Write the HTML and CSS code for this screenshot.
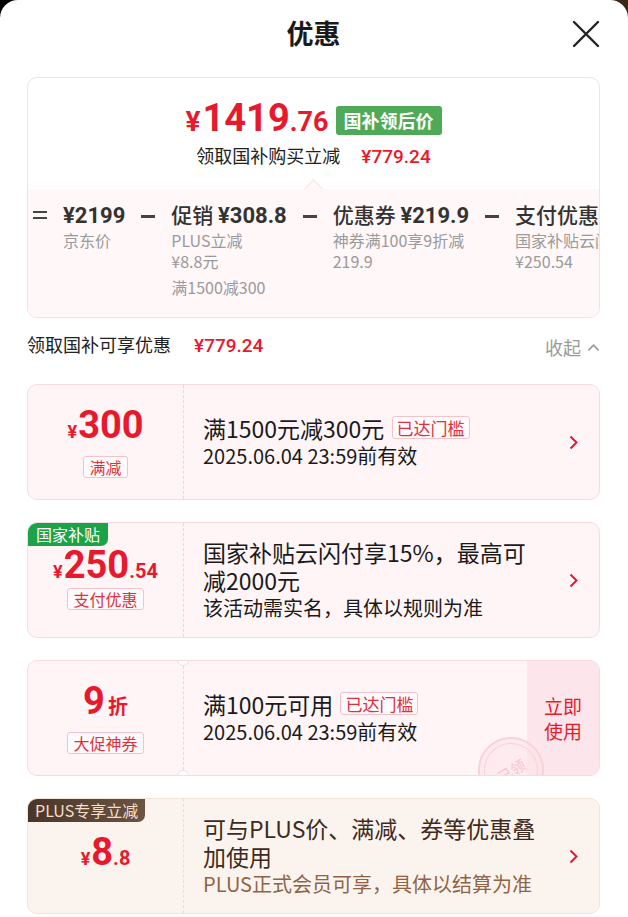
FILE: index.html
```html
<!DOCTYPE html>
<html lang="zh-CN">
<head>
    <meta charset="UTF-8">
    <title>优惠</title>
    <link rel="stylesheet" href="styles.css">
</head>
<body>
<div class="sheet">

    <header class="head">
        <span></span>
        <h1>优惠</h1>
        <svg class="close" viewBox="0 0 28 28" width="28" height="28">
            <path d="M2 2 L26 26 M26 2 L2 26" stroke="#222" stroke-width="2.4" fill="none" stroke-linecap="round"/>
        </svg>
    </header>

    <!-- 到手价汇总 -->
    <section class="summary">
        <div class="sum-top">
            <div class="final">
                <span class="final-price"><span class="cur">¥</span>1419<span class="dec">.76</span></span>
                <span class="badge-green">国补领后价</span>
            </div>
            <div class="save">领取国补购买立减 <span class="red">¥779.24</span></div>
        </div>
        <div class="sum-bottom">
            <span class="notch-up"></span>
            <div class="calc">
                <span class="op op-eq"></span>
                <div class="term">
                    <div class="term-head"><b>¥2199</b></div>
                    <div class="term-sub">京东价</div>
                </div>
                <span class="op op-minus"></span>
                <div class="term">
                    <div class="term-head">促销 <b>¥308.8</b></div>
                    <div class="term-sub">PLUS立减</div>
                    <div class="term-sub">¥8.8元</div>
                    <div class="term-sub spaced">满1500减300</div>
                </div>
                <span class="op op-minus"></span>
                <div class="term">
                    <div class="term-head">优惠券 <b>¥219.9</b></div>
                    <div class="term-sub">神券满100享9折减</div>
                    <div class="term-sub">219.9</div>
                </div>
                <span class="op op-minus"></span>
                <div class="term">
                    <div class="term-head">支付优惠 <b>¥250.54</b></div>
                    <div class="term-sub">国家补贴云闪付</div>
                    <div class="term-sub">¥250.54</div>
                </div>
            </div>
        </div>
    </section>

    <div class="section-row">
        <div class="section-title">领取国补可享优惠 <span class="red">¥779.24</span></div>
        <div class="collapse">收起
            <svg viewBox="0 0 14 9" width="13" height="9"><path d="M1.5 7.5 L7 2 L12.5 7.5" stroke="#9a9a9a" stroke-width="1.8" fill="none"/></svg>
        </div>
    </div>

    <div class="coupons">

        <div class="coupon">
            <div class="c-left">
                <div class="amount"><span class="cur">¥</span><span class="int">300</span></div>
                <span class="tag">满减</span>
            </div>
            <div class="c-main">
                <div class="c-title">满1500元减300元 <span class="tag">已达门槛</span></div>
                <div class="c-desc">2025.06.04 23:59前有效</div>
            </div>
            <div class="c-arrow">
                <svg viewBox="0 0 9 15" width="9" height="15"><path d="M1.5 1.5 L7.5 7.5 L1.5 13.5" stroke="#e8192c" stroke-width="2" fill="none"/></svg>
            </div>
        </div>

        <div class="coupon tight">
            <span class="corner corner-green">国家补贴</span>
            <div class="c-left">
                <div class="amount"><span class="cur">¥</span><span class="int">250</span><span class="dec">.54</span></div>
                <span class="tag">支付优惠</span>
            </div>
            <div class="c-main">
                <div class="c-title">国家补贴云闪付享15%，最高可减2000元</div>
                <div class="c-desc">该活动需实名，具体以规则为准</div>
            </div>
            <div class="c-arrow">
                <svg viewBox="0 0 9 15" width="9" height="15"><path d="M1.5 1.5 L7.5 7.5 L1.5 13.5" stroke="#e8192c" stroke-width="2" fill="none"/></svg>
            </div>
        </div>

        <div class="coupon">
            <span class="hole hole-top"></span>
            <span class="hole hole-bottom"></span>
            <div class="c-left">
                <div class="amount"><span class="int">9</span><span class="unit">折</span></div>
                <span class="tag">大促神券</span>
            </div>
            <div class="c-main">
                <div class="c-title">满100元可用 <span class="tag">已达门槛</span></div>
                <div class="c-desc">2025.06.04 23:59前有效</div>
            </div>
            <div class="c-action">立即<br>使用</div>
            <span class="stamp"><span>已领</span></span>
        </div>

        <div class="coupon plus">
            <span class="corner corner-plus">PLUS专享立减</span>
            <div class="c-left">
                <div class="amount"><span class="cur">¥</span><span class="int">8</span><span class="dec">.8</span></div>
            </div>
            <div class="c-main">
                <div class="c-title">可与PLUS价、满减、券等优惠叠加使用</div>
                <div class="c-desc">PLUS正式会员可享，具体以结算为准</div>
            </div>
            <div class="c-arrow">
                <svg viewBox="0 0 9 15" width="9" height="15"><path d="M1.5 1.5 L7.5 7.5 L1.5 13.5" stroke="#e8192c" stroke-width="2" fill="none"/></svg>
            </div>
        </div>

    </div>
</div>
</body>
</html>
```

FILE: styles.css
```css
* {
    box-sizing: border-box;
    margin: 0;
    padding: 0;
}
html, body {
    height: 100%;
}
body {
    font-family: "Noto Sans CJK SC", "Noto Sans", sans-serif;
    background: linear-gradient(90deg, #050302, #3b2716);
    color: #1a1a1a;
    overflow: hidden;
}
.red {
    color: #e8192c;
    font-family: Roboto, "Noto Sans CJK SC", sans-serif;
    font-weight: 500;
}
.sheet {
    background: #fff;
    border-radius: 18px 18px 0 0;
    min-height: 100%;
    padding: 0 28px 0 27px;
}

/* header */
.head {
    height: 68px;
    display: grid;
    grid-template-columns: 1fr auto 1fr;
    align-items: center;
}
.head h1 {
    font-size: 27px;
    font-weight: 700;
    color: #1a1a1a;
    margin-top: -3px;
}
.close {
    justify-self: end;
}

/* summary */
.summary {
    margin-top: 9px;
    border: 1px solid #f8dee3;
    border-radius: 10px;
    overflow: hidden;
}
.sum-top {
    padding: 22px 0 19px;
    text-align: center;
}
.final {
    display: flex;
    justify-content: center;
    align-items: center;
    gap: 7px;
    height: 40px;
}
.final-price {
    color: #e8192c;
    font-family: Roboto, sans-serif;
    font-weight: 700;
    font-size: 38px;
    line-height: 40px;
}
.final-price .cur {
    font-size: 28px;
    margin-right: 2px;
}
.final-price .dec {
    font-size: 27px;
}
.badge-green {
    background: #4faa57;
    color: #fff;
    font-size: 18px;
    font-weight: 700;
    height: 29px;
    line-height: 29px;
    padding: 0 8px;
    border-radius: 3px;
}
.save {
    margin-top: 2px;
    font-size: 18px;
    line-height: 26px;
    color: #222;
}
.save .red {
    font-size: 19px;
    margin-left: 17px;
}
.sum-bottom {
    position: relative;
    background: #fff7f8;
    padding: 11px 0 19px 5px;
}
.notch-up {
    position: absolute;
    left: 279px;
    top: -7px;
    width: 13px;
    height: 13px;
    background: #fff7f8;
    border-top: 1px solid #f8e3e7;
    border-left: 1px solid #f8e3e7;
    transform: rotate(45deg);
}
.calc {
    display: flex;
    gap: 16px;
    white-space: nowrap;
}
.op {
    flex: none;
    width: 14px;
}
.op-eq {
    height: 8px;
    margin-top: 11px;
    border-top: 2.5px solid #444;
    border-bottom: 2.5px solid #444;
}
.op-minus {
    height: 2.5px;
    margin-top: 15px;
    background: #444;
}
.term-head {
    font-size: 21px;
    line-height: 28px;
    color: #333;
    font-weight: 500;
}
.term-head b {
    font-family: Roboto, sans-serif;
    font-weight: 700;
    font-size: 22px;
}
.term-sub {
    font-size: 16px;
    line-height: 21px;
    color: #9a9a9a;
}
.term-sub.spaced {
    margin-top: 5px;
}

/* section title */
.section-row {
    display: flex;
    justify-content: space-between;
    align-items: center;
    height: 28px;
    margin-top: 12px;
}
.section-title {
    font-size: 18px;
    color: #222;
}
.section-title .red {
    font-size: 19px;
    margin-left: 19px;
}
.collapse {
    font-size: 18px;
    color: #9a9a9a;
    display: flex;
    align-items: center;
    gap: 6px;
    margin-top: 6px;
}

/* coupons */
.coupons {
    display: flex;
    flex-direction: column;
    gap: 22px;
    margin-top: 26px;
}
.coupon {
    position: relative;
    display: flex;
    flex: none;
    height: 116px;
    background: #fff5f7;
    border: 1px solid #f8dbe1;
    border-radius: 10px;
    overflow: hidden;
}
.c-left {
    width: 156px;
    flex: none;
    display: flex;
    flex-direction: column;
    align-items: center;
    justify-content: center;
    border-right: 1px dashed #f4d2d9;
}
.amount {
    color: #e8192c;
    font-family: Roboto, sans-serif;
    font-weight: 700;
    line-height: 36px;
    white-space: nowrap;
}
.amount .cur {
    font-size: 18px;
    margin-right: 1px;
}
.amount .int {
    font-size: 38px;
}
.amount .dec {
    font-size: 20px;
}
.amount .unit {
    font-family: "Noto Sans CJK SC", sans-serif;
    font-size: 20px;
    margin-left: 3px;
}
.tag {
    display: inline-block;
    font-size: 16px;
    line-height: 20px;
    color: #e0303e;
    background: rgba(255, 255, 255, 0.6);
    border: 1px solid #f3c3cb;
    border-radius: 3px;
    padding: 0 5px;
    margin-top: 5px;
}
.tight .amount {
    line-height: 30px;
}
.tight .c-left .tag {
    margin-top: 0;
}
.c-main {
    flex: 1;
    min-width: 0;
    padding-left: 19px;
    display: flex;
    flex-direction: column;
    justify-content: center;
}
.c-title {
    font-size: 23px;
    line-height: 28px;
    color: #1a1a1a;
}
.c-title .tag {
    margin: 0 0 0 2px;
    font-size: 17px;
    line-height: 21px;
    padding: 0 4px;
    vertical-align: 3px;
}
.c-desc {
    font-size: 20px;
    line-height: 28px;
    color: #1a1a1a;
}
.c-arrow {
    width: 60px;
    flex: none;
    display: flex;
    align-items: center;
    justify-content: flex-end;
    padding-right: 21px;
}
.c-action {
    width: 72px;
    flex: none;
    background: #fde6eb;
    color: #e8192c;
    font-size: 19px;
    line-height: 25px;
    display: flex;
    align-items: center;
    justify-content: center;
    text-align: center;
}

/* corner labels */
.corner {
    position: absolute;
    left: 0;
    top: 0;
    height: 23px;
    line-height: 23px;
    font-size: 16px;
    padding: 0 8px;
    border-radius: 0 0 7px 0;
    z-index: 1;
}
.corner-green {
    background: #1ba34a;
    color: #fff;
}
.corner-plus {
    background: linear-gradient(90deg, #4a3627, #6b5444);
    color: #f7dfc6;
    padding: 0 7px;
}

/* ticket holes */
.hole {
    position: absolute;
    left: 149px;
    width: 12px;
    height: 12px;
    background: #fff;
    border: 1px solid #f8dbe1;
    border-radius: 50%;
    z-index: 1;
}
.hole-top {
    top: -7px;
}
.hole-bottom {
    bottom: -7px;
}

/* claimed stamp */
.stamp {
    position: absolute;
    left: 450px;
    top: 76px;
    width: 66px;
    height: 66px;
    border: 2px solid #f8d2d9;
    border-radius: 50%;
    display: flex;
    align-items: center;
    justify-content: center;
    background: rgba(253, 226, 232, 0.5);
}
.stamp span {
    font-size: 15px;
    color: #f6c2cc;
    transform: rotate(-32deg);
    border: 1px solid #f8d2d9;
    border-radius: 50%;
    width: 54px;
    height: 54px;
    display: flex;
    align-items: center;
    justify-content: center;
}

/* PLUS card */
.plus {
    background: #fbf4ee;
    border-color: #f4e4d8;
}
.plus .c-left {
    border-right-color: #efdccf;
}
.plus .c-title {
    color: #3f2b1d;
}
.plus .c-desc {
    color: #8f6446;
}
```
